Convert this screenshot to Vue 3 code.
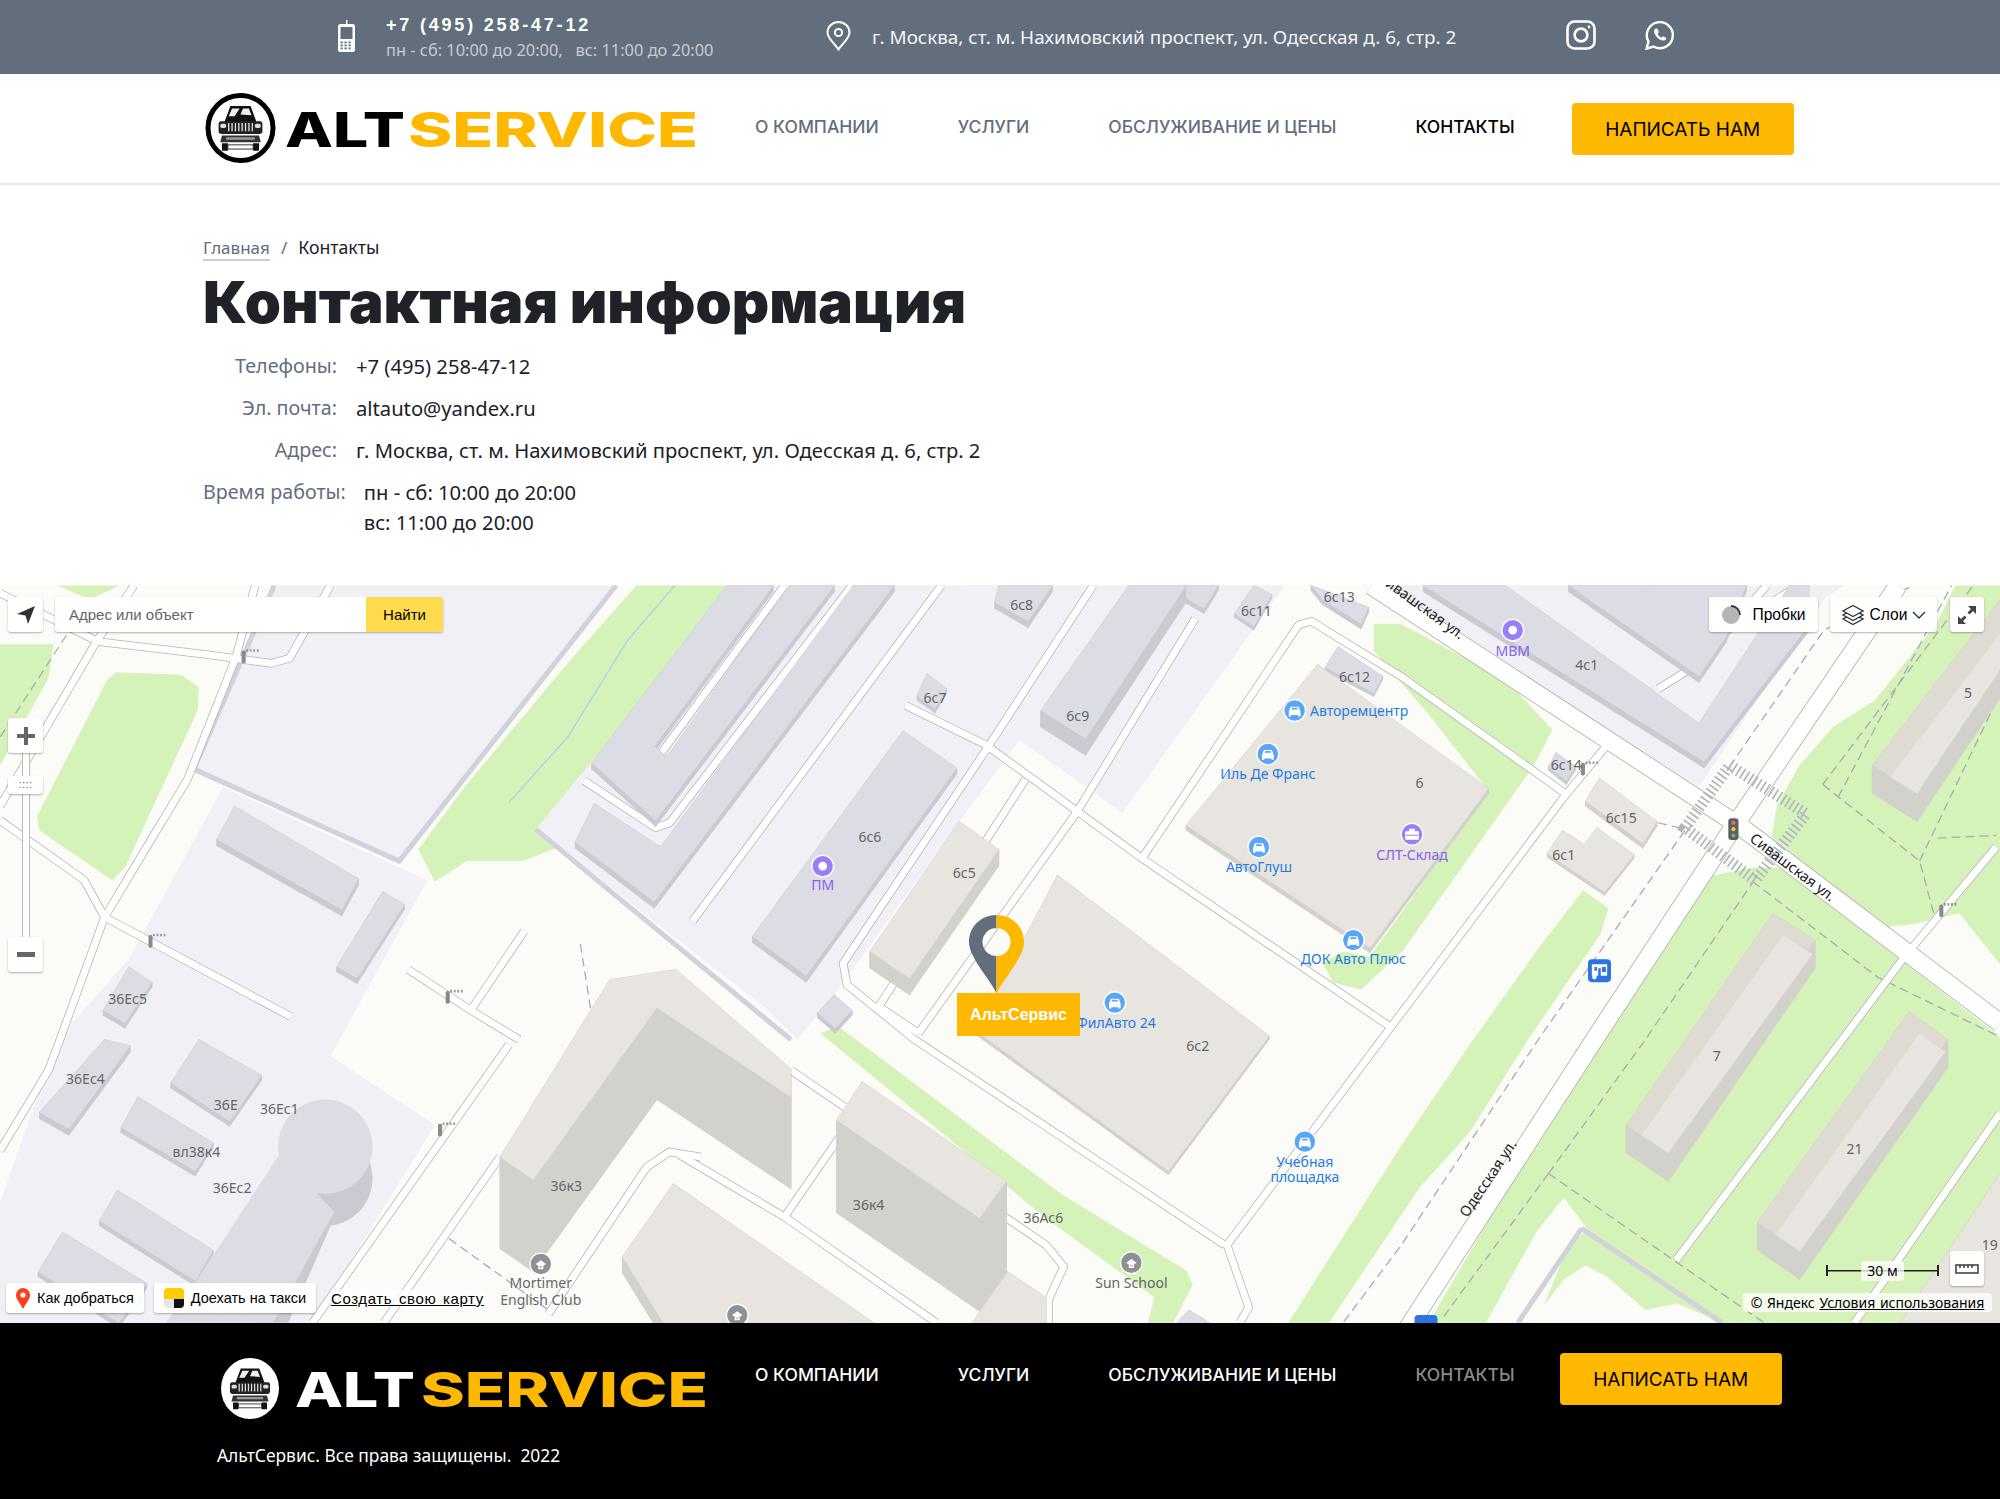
<template>
  <div class="page">
    <!-- верхняя полоса -->
    <div class="topbar">
      <svg class="ic-phone" width="17" height="33" viewBox="0 0 17 33">
        <path d="M8 5V1h1.4v4" fill="#fff" />
        <rect x="0" y="5" width="17" height="28" rx="2.5" fill="#fff" />
        <rect x="2.5" y="8" width="12" height="12" fill="#636e7d" />
        <g fill="#636e7d">
          <template v-for="r in 3" :key="r">
            <rect v-for="c in 3" :key="c" :x="c * 4 - 1.5" :y="19.5 + r * 3" width="2.2" height="1.8" />
          </template>
        </g>
      </svg>
      <div class="tel-block">
        <div class="tel">+7 (495) 258-47-12</div>
        <div class="tel-sub">пн - сб: 10:00 до 20:00,&nbsp;&nbsp; вс: 11:00 до 20:00</div>
      </div>
      <svg class="ic-pin" width="25" height="30" viewBox="0 0 25 30" fill="none" stroke="#fff" stroke-width="2">
        <path d="M12.5 28.5C9 23 1.5 17.5 1.5 11.5a11 10.5 0 0 1 22 0c0 6-7.5 11.5-11 17z" />
        <circle cx="12.5" cy="11.5" r="3.6" />
      </svg>
      <div class="top-address">г. Москва, ст. м. Нахимовский проспект, ул. Одесская д. 6, стр. 2</div>
      <svg class="ic-insta" width="30" height="30" viewBox="0 0 30 30" fill="none" stroke="#fff" stroke-width="2.6">
        <rect x="1.5" y="1.5" width="27" height="27" rx="7" />
        <circle cx="15" cy="15" r="6.4" />
        <circle cx="23" cy="7" r="1.4" fill="#fff" stroke="none" />
      </svg>
      <svg class="ic-wa" width="30" height="30" viewBox="0 0 30 30" fill="none" stroke="#fff" stroke-width="2.4">
        <path d="M1.6 28.6l1.9-7A13 13 0 1 1 8.6 26.6z" />
        <path d="M10.6 8.4c-2 1.2-2 3.6-.3 6.6 2 3.4 5 5.4 7.6 5.6 1.8.1 3.2-1 3.4-2.7l-3.2-1.7-1.5 1.6c-1.6-.6-3.4-2.4-4-4l1.4-1.6-1.6-3.5z" fill="#fff" stroke="none" />
      </svg>
    </div>

    <!-- шапка -->
    <header class="head">
      <svg class="logo" width="495" height="72" viewBox="0 0 495 72">
        <circle cx="35.5" cy="36" r="32.5" fill="#fff" stroke="#000" stroke-width="5" />
        <use href="#car" x="6" y="6" width="59" height="60" />
        <text class="logo-t" x="80" y="55" fill="#000" textLength="120" lengthAdjust="spacingAndGlyphs">ALT</text>
        <text class="logo-t" x="203" y="55" fill="#ffb800" textLength="290" lengthAdjust="spacingAndGlyphs">SERVICE</text>
      </svg>
      <nav class="nav">
        <a v-for="n in navItems" :key="n" :class="{ cur: n === 'КОНТАКТЫ' }">{{ n }}</a>
      </nav>
      <a class="btn">НАПИСАТЬ НАМ</a>
    </header>

    <!-- контакты -->
    <main class="main">
      <div class="crumbs">
        <a>Главная</a><span class="sep">/</span><span class="here">Контакты</span>
      </div>
      <h1>Контактная информация</h1>
      <div class="row"><div class="lbl">Телефоны:</div><div class="val">+7 (495) 258-47-12</div></div>
      <div class="row"><div class="lbl">Эл. почта:</div><div class="val">altauto@yandex.ru</div></div>
      <div class="row"><div class="lbl">Адрес:</div><div class="val">г. Москва, ст. м. Нахимовский проспект, ул. Одесская д. 6, стр. 2</div></div>
      <div class="row row-time">
        <div class="lbl">Время работы:</div>
        <div class="val">пн - сб: 10:00 до 20:00<br />вс: 11:00 до 20:00</div>
      </div>
    </main>

    <!-- карта -->
    <section class="map">
      <svg class="map-svg" width="2000" height="738" viewBox="0 458.6 1568 578.6" preserveAspectRatio="none">
        <defs>
          <symbol id="car" viewBox="0 0 70 70">
            <path d="M16 28L23 9h24l7 19z" fill="#111" />
            <path d="M25 12h9l-6 9h-7zM38 12h7l3 8-13-1z" fill="#eee" />
            <rect x="9" y="27" width="52" height="15" rx="3" fill="#222" />
            <path d="M21 29v10M25 29v10M29 29v10M33 29v10M37 29v10M41 29v10M45 29v10M49 29v10" stroke="#ddd" stroke-width="1.6" />
            <rect x="11" y="30" width="7" height="5" rx="2" fill="#ddd" />
            <rect x="52" y="30" width="7" height="5" rx="2" fill="#ddd" />
            <path d="M13 44h44l2 8H11z" fill="#333" />
            <path d="M18 46h34v3H18z" fill="#999" />
            <path d="M13 53h7v9h-7zM50 53h7v9h-7z" fill="#111" />
            <path d="M20 55h30v5H20z" fill="#fff" stroke="#111" />
          </symbol>
        </defs>

        <rect x="0" y="458" width="1568" height="580" fill="#fbfcf7" />
        <polygon v-for="(g, i) in greens" :key="'g' + i" :points="g" fill="#d5f2b9" />
        <polygon v-for="(c, i) in creams" :key="'c' + i" :points="c" fill="#fbfcf7" />
        <polygon v-for="(l, i) in lights" :key="'l' + i" :points="l" fill="#f0f0f6" />
        <polyline points="529,459 492,502 445,578 399,629" fill="none" stroke="#a9d3ee" stroke-width="1" />
        <polyline v-for="(f, i) in fences" :key="'f' + i" :points="f" fill="none" stroke="#d2d2dc" stroke-width="4" />

        <polyline v-for="(d, i) in dashes" :key="'d' + i" :points="d" fill="none" stroke="#a7aab6" stroke-width="1" stroke-dasharray="7 4" />

        <polyline v-for="(r, i) in roads" :key="'rc' + i" :points="r" fill="none" stroke="#b4b4b4" stroke-width="6.6" stroke-linejoin="round" />
        <polyline v-for="(r, i) in mainRoads" :key="'mc' + i" :points="r" fill="none" stroke="#b4b4b4" stroke-width="15" />
        <polyline v-for="(r, i) in roads" :key="'rw' + i" :points="r" fill="none" stroke="#fff" stroke-width="5.4" stroke-linejoin="round" />
        <polyline v-for="(r, i) in mainRoads" :key="'mw' + i" :points="r" fill="none" stroke="#fff" stroke-width="13.6" />
        <polyline points="1356,600 1416,638 1376,690 1321,649 1356,600" fill="none" stroke="#b4b6bf" stroke-width="9" stroke-dasharray="1.4 2.4" />

        <g v-for="(b, i) in buildingShapes" :key="'b' + i">
          <polygon v-for="(s, j) in b.sides" :key="j" :points="s" :fill="b.side" :stroke="b.side" stroke-width=".6" />
          <polygon :points="b.top" :fill="b.fill" />
        </g>
        <!-- светлая часть крыши у домов 5, 7, 21 -->
        <polygon v-for="(r, i) in roofs" :key="'rf' + i" :points="r" fill="#e8e4df" />
        <!-- круглое здание 36Ес2 -->
        <ellipse cx="255" cy="924" rx="37" ry="37" fill="#c9cad2" />
        <polygon points="264,950 226,1037 200,1037 262,930" fill="#c9cad2" />
        <polygon points="219,905 150,1010 130,1037 214,1037 262,950" fill="#dcdde4" />
        <ellipse cx="255" cy="899" rx="37" ry="37" fill="#dcdde4" />

        <g v-for="(b, i) in barriers" :key="'br' + i" :transform="`translate(${b[0]} ${b[1]})`">
          <rect x="-1.6" y="-5" width="3.2" height="10" rx="1.4" fill="#8d8883" />
          <path d="M2 -5h10" stroke="#9a9590" stroke-width="2" stroke-dasharray="1.4 1.4" />
        </g>

        <text v-for="(t, i) in grayLabels" :key="'t' + i" :x="t[1]" :y="t[2]" class="mt" text-anchor="middle" fill="#666">{{ t[0] }}</text>
        <text v-for="(t, i) in blueLabels" :key="'u' + i" :x="t[1]" :y="t[2]" class="mt" :text-anchor="t[3] || 'middle'" fill="#1f7de0">{{ t[0] }}</text>
        <text v-for="(t, i) in purpleLabels" :key="'v' + i" :x="t[1]" :y="t[2]" class="mt" text-anchor="middle" fill="#8560f2">{{ t[0] }}</text>
        <text class="st" transform="translate(1403 683) rotate(37)" text-anchor="middle">Сивашская ул.</text>
        <text class="st" transform="translate(1112 478) rotate(36)" text-anchor="middle">Сивашская ул.</text>
        <text class="st" transform="translate(1170 926) rotate(-56)" text-anchor="middle">Одесская ул.</text>

        <g v-for="(p, i) in carPois" :key="'p' + i" :transform="`translate(${p[0]} ${p[1]})`">
          <circle r="9" fill="#fff" />
          <circle r="8" fill="#5aa5f5" />
          <path d="M-4.6 1l1.400-4h6.400l1.400 4v3.600h-1.800v-1h-5.600v1h-1.800z" fill="#fff" />
          <path d="M-2.600-.8l.6-1.400h4l.6 1.400z" fill="#5aa5f5" />
        </g>
        <g v-for="(p, i) in ringPois" :key="'q' + i" :transform="`translate(${p[0]} ${p[1]})`">
          <circle r="9" fill="#fff" />
          <circle r="8" fill="#9a7df8" />
          <circle r="3.4" fill="#fff" />
        </g>
        <g transform="translate(1107 654)">
          <circle r="9" fill="#fff" />
          <circle r="8" fill="#9a7df8" />
          <path d="M-5-2h10v6H-5zM-2-2v-2h4v2" fill="#fff" stroke="#fff" stroke-width=".7" />
          <path d="M-5 .8H5" stroke="#9a7df8" stroke-width=".8" />
        </g>
        <g v-for="(p, i) in grayPois" :key="'h' + i" :transform="`translate(${p[0]} ${p[1]})`">
          <circle r="9" fill="#fff" />
          <circle r="8" fill="#8f9196" />
          <path d="M-4 0l4-3 4 3-4 3zM-2 2v2h4V2" fill="#fff" />
        </g>

        <!-- светофор -->
        <g transform="translate(1359 650)">
          <rect x="-4" y="-8.5" width="8" height="17" rx="2.6" fill="#5b5f68" />
          <circle cy="-5" r="1.6" fill="#e0765f" />
          <circle r="1.6" fill="#eecb3e" />
          <circle cy="5" r="1.6" fill="#6fbb5c" />
        </g>
        <!-- остановка -->
        <g transform="translate(1254 761)">
          <rect x="-9" y="-9" width="18" height="18" rx="3" fill="#2b74e2" />
          <path d="M-6-5h12v9h-5v-6h-2v6h-5zM-4-3v3h2v-3zM2-3v4h3v-4z" fill="#fff" />
          <circle cx="-4" cy="5" r="1.8" fill="#fff" />
        </g>
        <rect x="1109" y="1031" width="18" height="12" rx="3" fill="#2b74e2" />
      </svg>

      <!-- метка -->
      <div class="marker">
        <svg width="55" height="78" viewBox="0 0 55 78">
          <path d="M27.5 0C12.3 0 0 11.3 0 27c0 15 18 33 27.5 51zM27.5 13a14 14 0 0 0 0 28z" fill="#636e7d" fill-rule="evenodd" />
          <path d="M27.5 0C42.7 0 55 11.3 55 27c0 15-18 33-27.5 51V41a14 14 0 0 0 0-28z" fill="#ffb800" />
        </svg>
        <div class="marker-label">АльтСервис</div>
      </div>

      <!-- элементы управления -->
      <button class="ctl locate">
        <svg width="20" height="20" viewBox="0 0 20 20"><path d="M19 1L1 9l8.5 1.500L12 19z" fill="#333" /></svg>
      </button>
      <div class="ctl search">
        <div class="search-in">Адрес или объект</div>
        <div class="search-go">Найти</div>
      </div>
      <div class="slider"><div class="thumb">::::</div></div>
      <button class="ctl zoom-in"><svg width="18" height="18" viewBox="0 0 18 18"><path d="M7 0h4v7h7v4h-7v7H7v-7H0V7h7z" fill="#666" /></svg></button>
      <button class="ctl zoom-out"><svg width="18" height="5" viewBox="0 0 18 5"><rect width="18" height="5" fill="#666" /></svg></button>

      <div class="ctl traffic">
        <svg width="20" height="20" viewBox="0 0 20 20">
          <circle cx="10" cy="10" r="9" fill="#b5b5b5" />
          <path d="M10 1a9 9 0 0 1 9 9" fill="none" stroke="#333" stroke-width="1.8" />
        </svg>
        Пробки
      </div>
      <div class="ctl layers">
        <svg width="24" height="22" viewBox="0 0 24 22" fill="#fff" stroke="#333" stroke-width="1.4">
          <path d="M2 15l10 5.500L22 15l-10-5.500z" />
          <path d="M2 11l10 5.500L22 11 12 5.500z" />
          <path d="M2 7l10 5.500L22 7 12 1.500z" />
        </svg>
        Слои
        <svg width="14" height="8" viewBox="0 0 14 8" fill="none" stroke="#333" stroke-width="1.4"><path d="M1 1l6 6 6-6" /></svg>
      </div>
      <button class="ctl expand">
        <svg width="18" height="18" viewBox="0 0 18 18" fill="#444">
          <path d="M10 0h8v8l-3-3-3.500 3.500-2-2L13 3zM8 18H0v-8l3 3 3.500-3.500 2 2L5 15z" />
        </svg>
      </button>

      <div class="ctl route">
        <svg width="14" height="21" viewBox="0 0 14 21"><path d="M7 0a7 7 0 0 0-7 7c0 4.500 4.500 9 7 14 2.500-5 7-9.500 7-14a7 7 0 0 0-7-7z" fill="#fc3f1d" /><circle cx="7" cy="7" r="2.600" fill="#fff" /></svg>
        Как добраться
      </div>
      <div class="ctl taxi">
        <svg width="20" height="20" viewBox="0 0 20 20">
          <path d="M0 11V4a4 4 0 0 1 4-4h12a4 4 0 0 1 4 4v7z" fill="#fc0" />
          <path d="M0 11h10v9H4a4 4 0 0 1-4-4z" fill="#e6e6e6" />
          <path d="M10 11h10v5a4 4 0 0 1-4 4h-6z" fill="#111" />
        </svg>
        Доехать на такси
      </div>
      <a class="make-map">Создать свою карту</a>
      <div class="scale">
        <span class="scale-lab">30 м</span>
      </div>
      <button class="ctl ruler">
        <svg width="24" height="12" viewBox="0 0 24 12" fill="none" stroke="#444" stroke-width="1.6">
          <rect x="1" y="2" width="22" height="8" />
          <path d="M5 2v3M9 2v3M13 2v3M17 2v3" />
        </svg>
      </button>
      <div class="copy">© Яндекс <a>Условия использования</a></div>
    </section>

    <!-- подвал -->
    <footer class="foot">
      <div class="foot-top">
        <svg class="foot-logo" width="490" height="62" viewBox="0 0 490 62">
          <ellipse cx="29" cy="30.500" rx="29" ry="30.500" fill="#fff" />
          <use href="#car" x="2" y="3" width="54" height="55" />
          <text class="logo-t" x="74" y="49" fill="#fff" textLength="120" lengthAdjust="spacingAndGlyphs">ALT</text>
          <text class="logo-t" x="200" y="49" fill="#ffb800" textLength="287" lengthAdjust="spacingAndGlyphs">SERVICE</text>
        </svg>
        <nav class="nav foot-nav">
          <a v-for="n in navItems" :key="n" :class="{ cur: n === 'КОНТАКТЫ' }">{{ n }}</a>
        </nav>
        <a class="btn">НАПИСАТЬ НАМ</a>
      </div>
      <div class="rights">АльтСервис. Все права защищены.&nbsp; 2022</div>
    </footer>
  </div>
</template>

<script setup>
const navItems = ['О КОМПАНИИ', 'УСЛУГИ', 'ОБСЛУЖИВАНИЕ И ЦЕНЫ', 'КОНТАКТЫ']

// все координаты карты даны в системе 1568x1175
const greens = [
  '45,459 94,459 70,470',
  '0,505 42,505 38,532 0,600',
  '91,527 142,529 156,539 155,557 98,680 88,690 31,651 29,640 84,533',
  '245,542 270,542 280,555 278,566 262,593 257,600 248,601 227,591 215,567 226,553',
  '328,666 341,691 366,675 410,675 436,665 444,645 443,625 455,612 549,494 580,459 499,459 445,520 365,616',
  '680,572 689,581 594,719 582,729 568,721 566,705 577,692',
  '755,459 780,459 766,504 776,523 776,530 762,545 747,536 743,523',
  '948,504 927,515 913,543 892,588 895,596 904,592 920,565',
  '1077,489 1098,489 1181,533 1217,572 1202,601 1100,745 1067,776 1045,770 1037,755 1053,746 1074,750 1167,620 1120,560 1077,510',
  '1241,698 1261,712 1255,732 1198,815 1152,888 1113,931 1042,1037 1010,1037 1098,899 1155,815 1205,745',
  '1340,687 1375,680 1400,680 1478,727 1482,745 1500,760 1568,813 1568,1037 1120,1037 1250,815',
  '1389,656 1393,632 1410,601 1437,570 1470,549 1518,489 1533,459 1568,459 1568,756 1536,716 1503,724 1478,727',
  '643,810 657,805 671,815 832,936 930,996 935,1007 920,1037 900,1037 905,1017 820,955'
]
const creams = [
  '1200,1037 1226,1003 1243,992 1260,1001 1290,1027 1315,1022 1350,1037',
  '1226,939 1245,964 1230,975 1205,1037 1165,1037 1205,965'
]
const lights = [
  '215,459 152,605 313,677 483,459',
  '175,617 335,690 259,828 341,882 245,1037 0,1037 0,943 45,815 101,752',
  '575,459 1007,459 880,637 799,580 753,643 654,780 625,815 600,790 420,650 549,494',
  '1080,459 1332,617 1430,470 1445,459'
]
const fences = [
  '215,459 152,603 313,675 483,459',
  '1240,963 1350,1037',
  '1240,963 1190,1037',
  '420,650 468,690 620,815'
]
const roads = [
  '0,465 77,503 161,513 213,520 227,516 259,459',
  '75,504 105,459',
  '75,504 0,632',
  '200,459 185,515 147,611 115,664 82,719 47,815 38,839 0,902',
  '0,643 66,690 82,719',
  '82,719 228,797',
  '320,760 369,792 407,815',
  '369,792 411,730',
  '399,819 245,1037',
  '392,907 301,1037',
  '549,907 525,903 507,915 430,1030',
  '532,905 615,954 734,1037',
  '615,954 662,886',
  '620,839 820,976 834,993 822,1019 822,1037',
  '710,553 773,584 894,672 1090,805',
  '738,459 543,722',
  '615,459 515,595',
  '458,612 514,649 525,645 668,459',
  '857,459 773,588 661,755 664,772 717,815 960,976',
  '937,485 844,637 720,810',
  '804,611 689,789 720,810',
  '896,672 1018,490 1028,487 1098,530 1227,622',
  '1260,584 1226,625 962,976 979,1025 972,1037',
  '1314,988 1494,749 1565,664',
  '1454,1037 1568,873',
  '1385,459 1332,520 1300,540',
  '1290,459 1340,500 1353,495 1410,459'
]
const mainRoads = [
  '1075,459 1366,649 1568,802',
  '1488,459 1358,650 1250,815 1098,1050'
]
const dashes = [
  '52,498 0,578',
  '455,740 464,797',
  '352,971 434,1030',
  '1214,920 1383,1037',
  '1214,920 1132,1032',
  '1214,920 1290,815 1374,692',
  '1374,691 1472,766 1568,813',
  '1429,615 1505,675 1516,716',
  '1505,675 1565,550',
  '1429,615 1547,459',
  '1441,625 1530,459',
  '1519,657 1565,655',
  '1356,601 1430,494 1500,459',
  '1321,651 1206,815 1098,977 1053,1037',
  '1300,645 1321,650'
]

const gray = ['#dcdde4', '#c9cad2']
const cream = ['#e8e4df', '#d3d1cb']
const creamOuter = ['#dedbd3', '#d3d1cb']
const buildings = [
  ['1116,459 1180,459 1332,567 1403,459 1418,459 1418,490 1336,597', 5, gray],
  ['1230,459 1332,530 1353,499 1369,459', 5, gray],
  ['464,598 570,459 606,459 513,585 523,593 619,459 654,459 514,643', 5, gray],
  ['466,630 518,664 669,459 701,459 513,707 451,660', 5, gray],
  ['708,573 750,602 632,765 590,734', 5, gray],
  ['783,459 825,459 806,487 780,472', 5, gray],
  ['885,459 930,459 851,579 816,557', 13, gray],
  ['930,459 955,459 944,477 930,469', 4, gray],
  ['727,528 742,540 733,555 719,545', 4, gray],
  ['983,459 997,466 983,491 968,481', 3, gray],
  ['1028,459 1073,476 1067,489 1037,470', 4, gray],
  ['1049,507 1084,530 1077,543 1039,523', 3, gray],
  ['184,632 281,689 268,713 170,658', 5, gray],
  ['300,699 317,709 280,767 264,758', 4, gray],
  ['101,758 119,770 98,802 81,792', 4, gray],
  ['82,815 102,820 54,885 31,872', 5, gray],
  ['156,815 205,843 180,879 134,849', 4, gray],
  ['108,860 167,896 153,918 95,884', 4, gray],
  ['92,933 167,980 153,1004 78,957', 4, gray],
  ['49,966 115,1006 93,1037 30,997', 4, gray],
  ['654,780 668,792 655,806 641,794', 4, gray],
  ['1220,590 1235,601 1228,612 1214,601', 3, ['#d9dbe4', '#c9cad2']],
  ['932,1027 948,1037 923,1037', 0, gray],
  ['752,644 783,666 713,767 682,746', 13, cream],
  ['829,686 995,812 916,918 765,808', 3, cream],
  ['1033,521 1167,618 1074,743 930,647', 4, cream],
  ['1254,610 1299,644 1288,661 1243,628', 4, cream],
  ['1225,651 1242,662 1252,649 1281,670 1258,699 1213,669', 3, cream],
  ['1468,600 1503,622 1568,525 1568,470', 22, creamOuter],
  ['1390,716 1423,737 1308,904 1275,882', 22, creamOuter],
  ['1497,793 1527,815 1411,981 1378,958', 22, creamOuter],
  ['1568,920 1568,1037 1490,1037', 0, cream],
  ['528,928 685,1037 520,1037 488,985', 13, cream],
  ['392,907 478,768 530,760 620,838 620,860 515,790 418,925', 72, cream],
  ['676,848 789,926 768,955 656,878', 73, cream],
  ['790,997 820,1017 820,1037 762,1037', 20, cream]
]
const roofs = [
  '1482,609 1503,622 1568,525 1568,497',
  '1398,733 1421,748 1308,904 1287,890',
  '1505,810 1525,825 1411,981 1392,968'
]

const parse = (s) => s.split(' ').map((p) => p.split(',').map(Number))

const buildingShapes = buildings.map(([pts, h, pal]) => {
  const list = parse(pts)
  // боковые стены - сдвиг по вертикали
  const sides = list.map((p, i) => {
    const q = list[(i + 1) % list.length]
    return `${p[0]},${p[1]} ${q[0]},${q[1]} ${q[0]},${q[1] + h} ${p[0]},${p[1] + h}`
  })
  return { top: pts, sides, fill: pal[0], side: pal[1] }
})

const barriers = [[191, 515], [118, 738], [351, 782], [345, 886], [1241, 603], [1522, 714]]

const grayLabels = [
  ['6с8', 801, 478], ['6с11', 985, 483], ['6с13', 1050, 472], ['6с12', 1062, 535], ['6с7', 733, 551],
  ['6с9', 845, 565], ['6с6', 682, 660], ['6с5', 756, 688], ['6', 1113, 618], ['6с14', 1228, 604],
  ['6с15', 1271, 645], ['6с1', 1226, 674], ['4с1', 1244, 525], ['5', 1543, 547], ['7', 1346, 832],
  ['21', 1454, 905], ['19', 1560, 980], ['6с2', 939, 824], ['36Ес5', 100, 787], ['36Ес4', 67, 850],
  ['36Е', 177, 870], ['36Ес1', 219, 873], ['вл38к4', 154, 907], ['36Ес2', 182, 935], ['36к3', 444, 934],
  ['36к4', 681, 949], ['36Ас6', 818, 959], ['Mortimer', 424, 1010], ['English Club', 424, 1023], ['Sun School', 887, 1010]
]
const blueLabels = [
  ['Авторемцентр', 1027, 561, 'start'], ['Иль Де Франс', 994, 611], ['АвтоГлуш', 987, 684],
  ['ДОК Авто Плюс', 1061, 756], ['ФилАвто 24', 875, 806], ['Учебная', 1023, 915], ['площадка', 1023, 927]
]
const purpleLabels = [['МВМ', 1186, 514], ['ПМ', 645, 698], ['СЛТ-Склад', 1107, 674]]

const carPois = [[1015, 557], [994, 591], [987, 664], [1061, 737], [874, 786], [1023, 895]]
const ringPois = [[1186, 494], [645, 679]]
const grayPois = [[424, 991], [887, 990], [578, 1031]]
</script>

<style>
html, body { background: #fff; }
</style>

<style scoped>
.page {
  width: 2000px;
  font-family: "Noto Sans", sans-serif;
  color: #1d2129;
}
.topbar {
  height: 74px;
  background: #636e7d;
  display: flex;
  align-items: center;
  padding-left: 338px;
  box-sizing: border-box;
  color: #fff;
}
.ic-phone { margin: 0 31px 3px 0; flex: none; }
.tel-block { width: 330px; margin-right: 110px; }
.tel {
  font-family: "Liberation Sans", sans-serif;
  font-weight: 700;
  font-size: 18px;
  letter-spacing: 2.8px;
  line-height: 22px;
  margin-bottom: 3px;
}
.tel-sub { font-size: 16.4px; line-height: 22px; color: #c6cbd2; white-space: nowrap; }
.ic-pin { flex: none; margin-right: 21px; margin-bottom: 3px; }
.top-address { width: 585px; margin-right: 109px; font-size: 18.9px; white-space: nowrap; color: #f3f4f6; }
.ic-insta { flex: none; margin-right: 49px; margin-bottom: 4px; }
.ic-wa { flex: none; margin-bottom: 4px; }

.head {
  height: 111px;
  box-sizing: border-box;
  border-bottom: 2px solid #e8e8ef;
  display: flex;
  align-items: flex-start;
  padding-left: 205px;
  padding-top: 18px;
}
.logo { flex: none; margin-right: 55px; }
.logo-t {
  font-family: "Inter", sans-serif;
  font-weight: 800;
  font-size: 48px;
}
.nav {
  display: flex;
  gap: 79px;
  padding-top: 24px;
  font-family: "Inter", sans-serif;
  font-weight: 500;
  font-size: 17.5px;
  line-height: 22px;
  color: #636e7d;
  white-space: nowrap;
}
.nav .cur { color: #000; }
.btn {
  flex: none;
  width: 222px;
  height: 52px;
  background: #ffb800;
  border-radius: 4px;
  color: #000;
  font-family: "Inter", sans-serif;
  font-size: 19px;
  font-weight: 400;
  display: flex;
  align-items: center;
  justify-content: center;
  margin-top: 11px;
  margin-left: 57px;
}

.main { padding: 51px 0 48px 203px; height: 400px; box-sizing: border-box; }
.crumbs { font-size: 17px; line-height: 22px; }
.crumbs a { color: #636e7d; border-bottom: 2px solid #c8ccd4; }
.crumbs .sep { margin: 0 11px; color: #636e7d; }
.crumbs .here { font-size: 17.7px; }
h1 {
  margin: 9px 0 15px;
  font-family: "Inter", sans-serif;
  font-weight: 900;
  font-size: 58px;
  line-height: 68px;
  color: #1f2226;
}
.row {
  display: flex;
  gap: 19px;
  line-height: 30px;
  margin-bottom: 12px;
}
.lbl { min-width: 134px; text-align: right; color: #636e7d; white-space: nowrap; font-size: 19.7px; }
.val { white-space: nowrap; font-size: 20.2px; }
.row-time .lbl { min-width: 141px; }
.row-time { gap: 18px; }

.map { position: relative; height: 738px; overflow: hidden; background: #fbfcf7; }
.map-svg { display: block; }
.mt { font-family: "Noto Sans", sans-serif; font-size: 11px; }
.st { font-family: "Noto Sans", sans-serif; font-size: 11.5px; fill: #222; }

.marker { position: absolute; left: 957px; top: 330px; width: 123px; }
.marker svg { display: block; margin-left: 12px; }
.marker-label {
  height: 43px;
  background: #ffb800;
  color: #fff;
  font-family: "Liberation Sans", sans-serif;
  font-weight: 700;
  font-size: 16px;
  line-height: 43px;
  text-align: center;
}

.ctl {
  position: absolute;
  box-sizing: border-box;
  background: #fff;
  border: 0;
  padding: 0;
  border-radius: 3px;
  box-shadow: 0 1px 2px rgba(0, 0, 0, .3);
  font-family: "Liberation Sans", sans-serif;
  font-size: 15px;
  color: #000;
  display: flex;
  align-items: center;
  justify-content: center;
}
.locate { left: 8px; top: 12px; width: 35px; height: 35px; }
.search { left: 55px; top: 12px; width: 388px; height: 35px; justify-content: flex-start; }
.search-in { flex: 1; padding-left: 14px; color: #666; }
.search-go {
  width: 77px;
  height: 35px;
  line-height: 35px;
  text-align: center;
  background: #ffdb4d;
  border-radius: 0 3px 3px 0;
}
.slider {
  position: absolute;
  left: 22px;
  top: 167px;
  width: 8px;
  height: 185px;
  background: #fff;
  border: solid #bbb;
  border-width: 0 1px;
  box-sizing: border-box;
}
.thumb {
  position: absolute;
  left: -15px;
  top: 24px;
  width: 35px;
  height: 18px;
  line-height: 16px;
  background: #fff;
  border-radius: 3px;
  box-shadow: 0 1px 2px rgba(0, 0, 0, .3);
  color: #666;
  font-family: "Liberation Sans", sans-serif;
  font-size: 11px;
  letter-spacing: .5px;
  text-align: center;
}
.zoom-in { left: 8px; top: 133px; width: 35px; height: 35px; }
.zoom-out { left: 8px; top: 352px; width: 35px; height: 35px; }

.traffic { left: 1709px; top: 12px; width: 109px; height: 35px; gap: 11px; font-size: 15.6px; }
.layers { left: 1830px; top: 12px; width: 107px; height: 35px; gap: 5px; font-size: 15.6px; }
.expand { left: 1950px; top: 12px; width: 34px; height: 35px; }

.route { left: 6px; top: 698px; width: 138px; height: 30px; gap: 7px; font-size: 14.5px; }
.taxi { left: 154px; top: 698px; width: 162px; height: 30px; gap: 7px; font-size: 14.5px; }
.make-map {
  position: absolute;
  left: 331px;
  top: 705px;
  font-family: "Liberation Sans", sans-serif;
  font-size: 15px;
  line-height: 17px;
  letter-spacing: .6px;
  word-spacing: 2px;
  color: #000;
  text-decoration: underline;
  background: rgba(255, 255, 255, .7);
}
.scale {
  position: absolute;
  left: 1826px;
  top: 680px;
  width: 113px;
  height: 11px;
  box-sizing: border-box;
  border: solid #222;
  border-width: 0 2px;
  display: flex;
  align-items: center;
  justify-content: center;
  background: linear-gradient(#222, #222) center / 100% 1.5px no-repeat;
}
.scale-lab {
  padding: 2px 6px;
  background: rgba(255, 255, 255, .75);
  border-radius: 3px;
  font-family: "Noto Sans", sans-serif;
  font-size: 14px;
  line-height: 16px;
  color: #000;
}
.ruler { left: 1950px; top: 666px; width: 34px; height: 35px; }
.copy {
  position: absolute;
  left: 1743px;
  top: 708px;
  width: 249px;
  height: 19px;
  text-align: center;
  background: rgba(255, 255, 255, .75);
  border-radius: 3px;
  font-family: "Noto Sans", sans-serif;
  font-size: 14px;
  word-spacing: 1px;
  line-height: 19px;
  color: #000;
  white-space: nowrap;
}
.copy a { text-decoration: underline; }

.foot { height: 176px; background: #000; color: #fff; box-sizing: border-box; padding-top: 30px; }
.foot-top { display: flex; align-items: flex-start; padding-left: 221px; height: 91px; }
.foot-logo { flex: none; margin-top: 5px; margin-right: 44px; }
.foot-nav { color: #fff; padding-top: 11px; }
.foot-nav .cur { color: #8a8a8a; }
.foot .btn { margin-top: 0; margin-left: 45px; }
.rights { padding-left: 217px; font-size: 17.4px; line-height: 22px; margin-top: 0; }
</style>
